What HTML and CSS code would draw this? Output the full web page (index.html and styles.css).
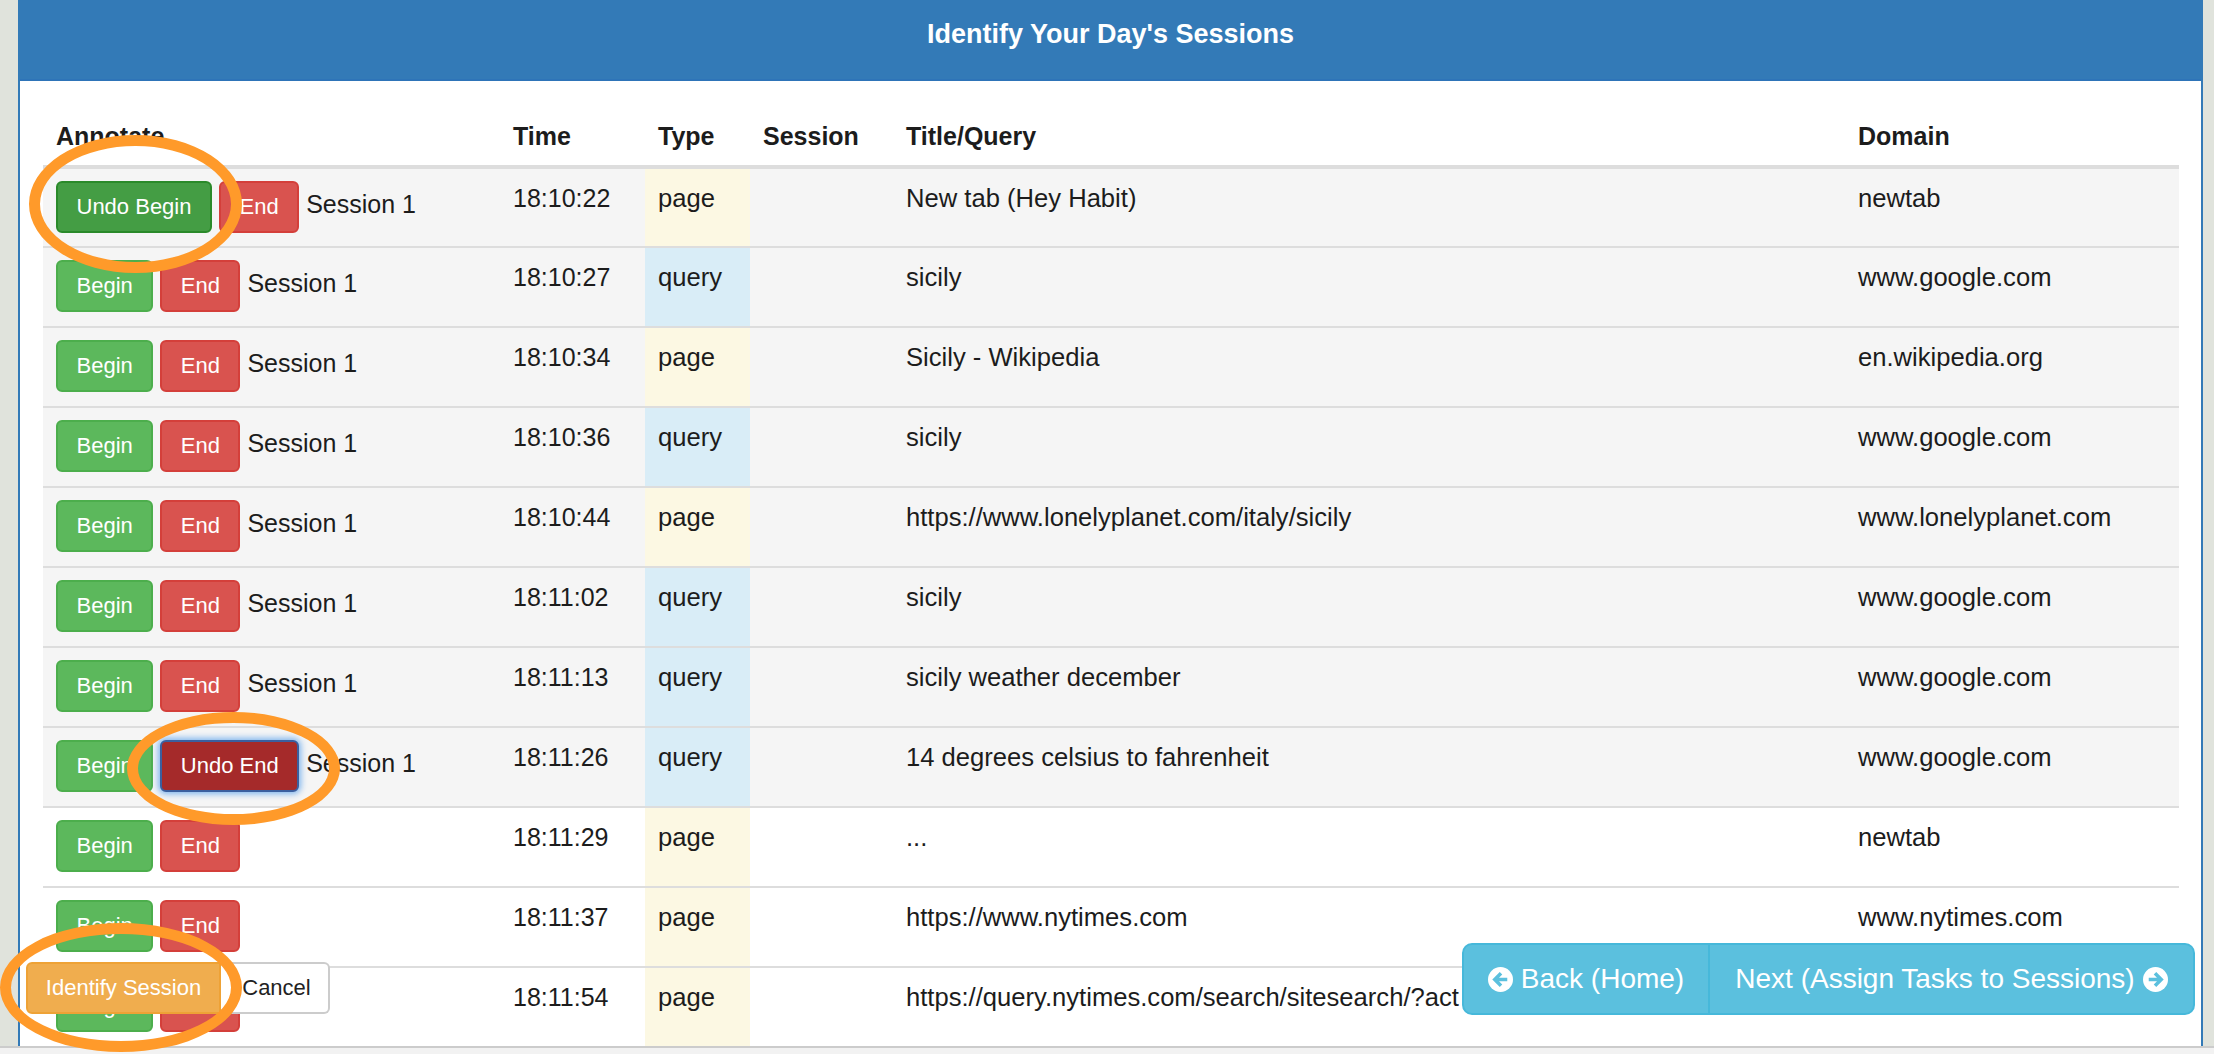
FILE: index.html

```html
<!DOCTYPE html>
<html>
<head>
    <meta charset="UTF-8">
    <title>Identify Your Day's Sessions</title>
    <link rel="stylesheet" href="styles.css">
</head>
<body>
    <div class="desk">
        <div class="panel">
            <h2 class="panel-heading">Identify Your Day's Sessions</h2>
            <div class="panel-body">
                <table class="sessions">
                    <colgroup>
                        <col class="col-annotate">
                        <col class="col-time">
                        <col class="col-type">
                        <col class="col-session">
                        <col class="col-title">
                        <col class="col-domain">
                    </colgroup>
                    <thead>
                        <tr><th>Annotate</th><th>Time</th><th>Type</th><th>Session</th><th>Title/Query</th><th>Domain</th></tr>
                    </thead>
                    <tbody>
                        <tr class="marked">
                            <td><div class="annotate"><button class="btn btn-begin-on">Undo Begin</button><button class="btn btn-end">End</button><span class="label">Session 1</span></div></td>
                            <td class="time">18:10:22</td><td class="type-page">page</td><td></td><td>New tab (Hey Habit)</td><td>newtab</td>
                        </tr>
                        <tr class="marked">
                            <td><div class="annotate"><button class="btn btn-begin">Begin</button><button class="btn btn-end">End</button><span class="label">Session 1</span></div></td>
                            <td class="time">18:10:27</td><td class="type-query">query</td><td></td><td>sicily</td><td>www.google.com</td>
                        </tr>
                        <tr class="marked">
                            <td><div class="annotate"><button class="btn btn-begin">Begin</button><button class="btn btn-end">End</button><span class="label">Session 1</span></div></td>
                            <td class="time">18:10:34</td><td class="type-page">page</td><td></td><td>Sicily - Wikipedia</td><td>en.wikipedia.org</td>
                        </tr>
                        <tr class="marked">
                            <td><div class="annotate"><button class="btn btn-begin">Begin</button><button class="btn btn-end">End</button><span class="label">Session 1</span></div></td>
                            <td class="time">18:10:36</td><td class="type-query">query</td><td></td><td>sicily</td><td>www.google.com</td>
                        </tr>
                        <tr class="marked">
                            <td><div class="annotate"><button class="btn btn-begin">Begin</button><button class="btn btn-end">End</button><span class="label">Session 1</span></div></td>
                            <td class="time">18:10:44</td><td class="type-page">page</td><td></td><td>https://www.lonelyplanet.com/italy/sicily</td><td>www.lonelyplanet.com</td>
                        </tr>
                        <tr class="marked">
                            <td><div class="annotate"><button class="btn btn-begin">Begin</button><button class="btn btn-end">End</button><span class="label">Session 1</span></div></td>
                            <td class="time">18:11:02</td><td class="type-query">query</td><td></td><td>sicily</td><td>www.google.com</td>
                        </tr>
                        <tr class="marked">
                            <td><div class="annotate"><button class="btn btn-begin">Begin</button><button class="btn btn-end">End</button><span class="label">Session 1</span></div></td>
                            <td class="time">18:11:13</td><td class="type-query">query</td><td></td><td>sicily weather december</td><td>www.google.com</td>
                        </tr>
                        <tr class="marked">
                            <td><div class="annotate"><button class="btn btn-begin">Begin</button><button class="btn btn-end-on">Undo End</button><span class="label">Session 1</span></div></td>
                            <td class="time">18:11:26</td><td class="type-query">query</td><td></td><td>14 degrees celsius to fahrenheit</td><td>www.google.com</td>
                        </tr>
                        <tr>
                            <td><div class="annotate"><button class="btn btn-begin">Begin</button><button class="btn btn-end">End</button></div></td>
                            <td class="time">18:11:29</td><td class="type-page">page</td><td></td><td>...</td><td>newtab</td>
                        </tr>
                        <tr>
                            <td><div class="annotate"><button class="btn btn-begin">Begin</button><button class="btn btn-end">End</button></div></td>
                            <td class="time">18:11:37</td><td class="type-page">page</td><td></td><td>https://www.nytimes.com</td><td>www.nytimes.com</td>
                        </tr>
                        <tr>
                            <td><div class="annotate"><button class="btn btn-begin">Begin</button><button class="btn btn-end">End</button></div></td>
                            <td class="time">18:11:54</td><td class="type-page">page</td><td></td><td class="clip">https://query.nytimes.com/search/sitesearch/?act</td><td></td>
                        </tr>
                    </tbody>
                </table>
            </div>
        </div>
    </div>
    <div class="status-strip"></div>

    <!-- floating toolbars -->
    <div class="identify-group">
        <button class="btn btn-identify">Identify Session</button><button class="btn btn-cancel">Cancel</button>
    </div>
    <div class="nav-group">
        <button class="btn-nav btn-back">
            <svg class="nav-icon" viewBox="0 0 24 24"><circle cx="12" cy="12" r="12" fill="#fff"/><path d="M18.5 12 H7 M12.5 6 L6.5 12 L12.5 18" fill="none" stroke="#5bc0de" stroke-width="3.4"/></svg>
            Back (Home)
        </button><button class="btn-nav btn-next">
            Next (Assign Tasks to Sessions)
            <svg class="nav-icon" viewBox="0 0 24 24"><circle cx="12" cy="12" r="12" fill="#fff"/><path d="M5.5 12 H17 M11.5 6 L17.5 12 L11.5 18" fill="none" stroke="#5bc0de" stroke-width="3.4"/></svg>
        </button>
    </div>

    <!-- hand drawn rings from the annotated screenshot -->
    <div class="ring ring-begin"></div>
    <div class="ring ring-end"></div>
    <div class="ring ring-identify"></div>
</body>
</html>
```

FILE: styles.css

```css
* {
    box-sizing: border-box;
}

html, body {
    margin: 0;
    height: 100%;
    overflow: hidden;
}

body {
    background-color: #f2f2f2;
    color: #1c1c1c;
    font-family: "Liberation Sans", Arial, sans-serif;
    font-size: 25.6px;
    line-height: 34px;
}

.desk {
    height: 1046px;
    padding-left: 18px;
    padding-right: 11px;
    background-color: #e0e3dc;
    overflow: hidden;
}

.panel {
    height: 100%;
    background-color: #fff;
    border-left: 2px solid #337ab7;
    border-right: 2px solid #337ab7;
}

.panel-heading {
    margin: 0;
    height: 81px;
    background-color: #337ab7;
    border-bottom: 2px solid #2e74b8;
    color: #fff;
    font-size: 27px;
    font-weight: bold;
    line-height: 68px;
    text-align: center;
}

.panel-body {
    padding: 25px 24px 0 23px;
}

.sessions {
    width: 2136px;
    table-layout: fixed;
    border-collapse: collapse;
}

.col-annotate { width: 457px; }
.col-time { width: 145px; }
.col-type { width: 105px; }
.col-session { width: 143px; }
.col-title { width: 952px; }
.col-domain { width: 334px; }

.sessions th {
    height: 61px;
    padding: 12px 13px;
    border-bottom: 4px solid #ddd;
    font-size: 25px;
    font-weight: bold;
    text-align: left;
}

.sessions td {
    height: 80px;
    padding: 12px 13px 0;
    border-top: 2px solid #ddd;
    vertical-align: top;
    white-space: nowrap;
    overflow: hidden;
}

.sessions td.time {
    font-size: 25px;
}

.sessions tbody tr:first-child td {
    border-top: none;
}

.marked td {
    background-color: #f5f5f5;
}

.sessions td.type-page {
    background-color: #fcf8e3;
}

.sessions td.type-query {
    background-color: #d9edf7;
}

.annotate {
    display: flex;
    align-items: center;
    gap: 7px;
}

.label {
    margin-bottom: 6px;
    font-size: 25px;
}

.btn {
    height: 52px;
    padding: 0 18.5px;
    border: 2px solid transparent;
    border-radius: 6px;
    color: #fff;
    font-family: inherit;
    font-size: 22px;
    white-space: nowrap;
}

.btn-begin {
    background-color: #5cb85c;
    border-color: #4cae4c;
}

.btn-begin-on {
    background-color: #449d44;
    border-color: #2a8a2a;
}

.btn-end {
    background-color: #d9534f;
    border-color: #d43f3a;
}

.btn-end-on {
    background-color: #a52a2a;
    border-color: #3b5f9f;
    box-shadow: 0 0 6px 2px #7db4ee;
}

.identify-group {
    position: absolute;
    left: 26px;
    top: 962px;
    display: flex;
}

.btn-identify {
    width: 195px;
    padding: 0;
    background-color: #f0ad4e;
    border-color: #eea236;
    border-radius: 6px 0 0 6px;
}

.btn-cancel {
    width: 109px;
    padding: 0 0 0 4px;
    background-color: #fff;
    border-color: #ccc;
    border-left: none;
    border-radius: 0 6px 6px 0;
    color: #222;
}

.nav-group {
    position: absolute;
    left: 1462px;
    top: 943px;
    display: flex;
    height: 72px;
}

.btn-nav {
    display: flex;
    align-items: center;
    justify-content: center;
    gap: 8px;
    height: 100%;
    padding: 0;
    background-color: #5bc0de;
    border: 2px solid #46b8da;
    color: #fff;
    font-family: inherit;
    font-size: 28px;
    white-space: nowrap;
}

.btn-back {
    width: 248px;
    border-radius: 10px 0 0 10px;
}

.btn-next {
    width: 485px;
    border-left: none;
    border-radius: 0 10px 10px 0;
}

.nav-icon {
    width: 25px;
    height: 25px;
    flex: none;
}

.status-strip {
    height: 8px;
    border-top: 2px solid #ccc;
}

.ring {
    position: absolute;
    border: 11px solid #ff9a2a;
    border-radius: 50%;
}

.ring-begin {
    left: 29px;
    top: 135px;
    width: 213px;
    height: 138px;
}

.ring-end {
    left: 127px;
    top: 712px;
    width: 213px;
    height: 113px;
}

.ring-identify {
    left: 0;
    top: 923px;
    width: 242px;
    height: 129px;
}
```
